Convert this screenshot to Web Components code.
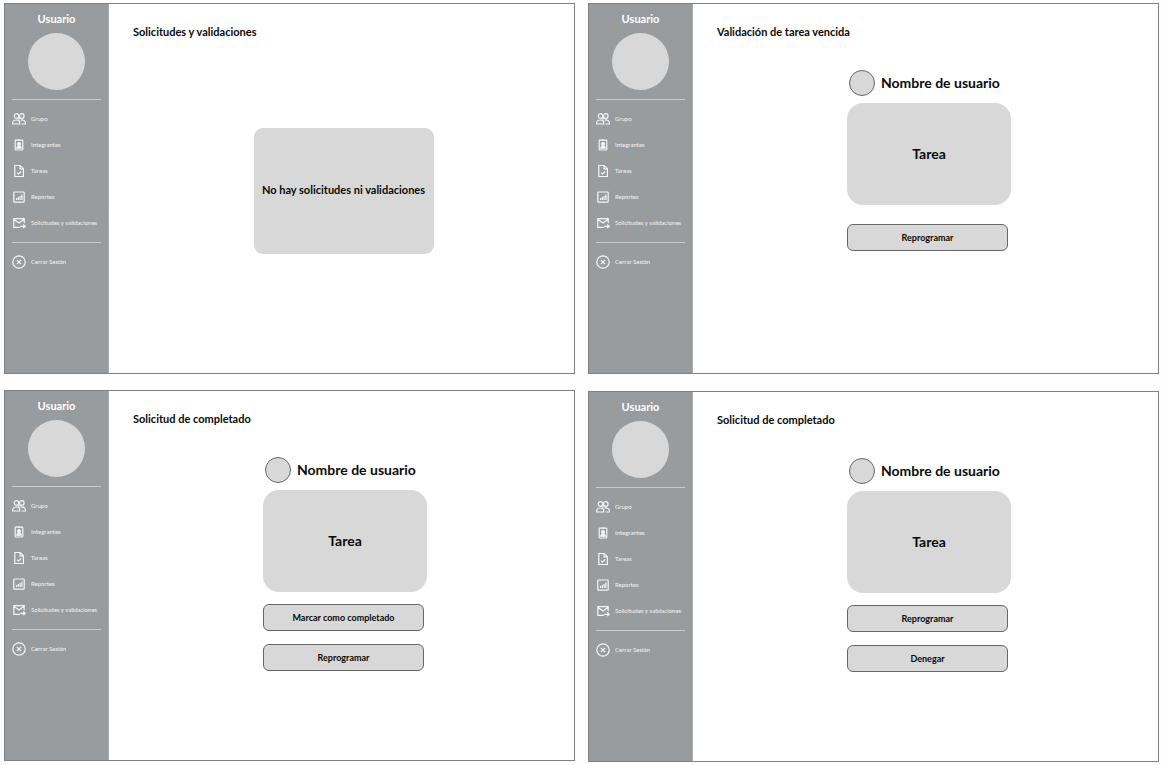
<!DOCTYPE html>
<html lang="es">
<head>
<meta charset="utf-8">
<title>Solicitudes y validaciones</title>
<style>
  body { margin: 0; background: #fefefe; color: #0a0a0a; font-family: Lato, "Liberation Sans", sans-serif; }
</style>
</head>
<body>
<wire-board>
  <wire-screen slot="left" heading="Solicitudes y validaciones">
    <empty-card>No hay solicitudes ni validaciones</empty-card>
  </wire-screen>
  <wire-screen slot="left" heading="Solicitud de completado">
    <task-request user="Nombre de usuario" task="Tarea">
      <action-button>Marcar como completado</action-button>
      <action-button>Reprogramar</action-button>
    </task-request>
  </wire-screen>
  <wire-screen slot="right" heading="Validación de tarea vencida">
    <task-request user="Nombre de usuario" task="Tarea" spaced>
      <action-button>Reprogramar</action-button>
    </task-request>
  </wire-screen>
  <wire-screen slot="right" heading="Solicitud de completado">
    <task-request user="Nombre de usuario" task="Tarea">
      <action-button>Reprogramar</action-button>
      <action-button>Denegar</action-button>
    </task-request>
  </wire-screen>
</wire-board>

<script>
const icons = {
  group: '<circle cx="4.5" cy="4" r="2.3"/><circle cx="9.8" cy="4" r="2.3"/><path d="M.7 12v-1.2C.7 9 2.5 8 4.5 8s3.2 1 3.2 2.6V12zM8.4 8.1c2.8-.7 5 .9 5 2.7V12H9.6M6.4 7.5l1.2-1.2"/>',
  badge: '<rect x="3.2" y="2.2" width="7.6" height="9.8" rx=".8"/><path d="M5.5 2h3M4.8 10.2c0-1.5 1-2 2.2-2s2.2.5 2.2 2z" fill="currentColor"/><circle cx="7" cy="6" r="1.5" fill="currentColor"/>',
  task: '<path d="M2.8 1.5h5.4l3.2 3.2v7.8H2.8zM8 1.5v3.3h3.3M5 8.7l1.5 1.5 2.7-2.8"/>',
  report: '<rect x="1.8" y="2" width="10.4" height="10.2" rx=".8"/><path d="M4.5 10V8M6.3 10V7M8.1 10V6M9.9 10V4.5"/>',
  mail: '<path d="M8 11.3H1.8V2.7h10.4v4.5M1.8 3.2L7 7l5.2-3.8M8.3 10.3h4.5M11.2 8.5l2 1.8-2 1.8"/>',
  close: '<circle cx="7" cy="7" r="6.2"/><path d="M4.8 4.8l4.4 4.4M9.2 4.8L4.8 9.2"/>'
};

function define(name, html, setup) {
  const template = document.createElement('template');
  template.innerHTML = html;
  customElements.define(name, class extends HTMLElement {
    constructor() {
      super();
      this.attachShadow({ mode: 'open' }).append(template.content.cloneNode(true));
    }
    connectedCallback() {
      if (setup) setup(this, this.shadowRoot);
    }
  });
}

define('nav-item', `
  <style>
    :host { display: block; }
    a { display: flex; align-items: center; gap: 5px; height: 26px; color: #f4f5f5; text-decoration: none; font-size: 6px; line-height: 8px; white-space: nowrap; }
    svg { width: 14px; height: 14px; flex: none; fill: none; stroke: currentColor; stroke-width: 1.2; }
  </style>
  <a href="#"><svg viewBox="0 0 14 14" aria-hidden="true"></svg><span><slot></slot></span></a>`,
  (host, root) => { root.querySelector('svg').innerHTML = icons[host.getAttribute('icon')]; });

define('side-menu', `
  <style>
    :host { display: block; background: #989c9f; border-right: 1px solid #aaadaf; padding: 8px 7px; box-sizing: border-box; }
    h2 { margin: 0; color: #fff; font-size: 11px; line-height: 14px; text-align: center; }
    .avatar { width: 57px; height: 57px; margin: 7px auto 9px; border-radius: 50%; background: #d8d8d8; }
    hr { margin: 0; border: 0; height: 1px; background: #c9cbcc; }
    nav { padding: 6px 0; }
  </style>
  <h2>Usuario</h2>
  <div class="avatar"></div>
  <hr>
  <nav aria-label="Principal">
    <nav-item icon="group">Grupo</nav-item>
    <nav-item icon="badge">Integrantes</nav-item>
    <nav-item icon="task">Tareas</nav-item>
    <nav-item icon="report">Reportes</nav-item>
    <nav-item icon="mail">Solicitudes y validaciones</nav-item>
  </nav>
  <hr>
  <nav aria-label="Cuenta"><nav-item icon="close">Cerrar Sesión</nav-item></nav>`);

define('wire-screen', `
  <style>
    :host { display: grid; grid-template-columns: 104px 1fr; min-height: 371px; box-sizing: border-box; border: 1px solid #7f8081; background: #fff; }
    main { padding: 20px 0 0 4px; }
    h1 { margin: 0 0 0 20px; font-size: 11px; line-height: 16px; }
  </style>
  <side-menu></side-menu>
  <main><h1></h1><slot></slot></main>`,
  (host, root) => { root.querySelector('h1').textContent = host.getAttribute('heading'); });

define('empty-card', `
  <style>
    :host { display: flex; align-items: center; justify-content: center; box-sizing: border-box; width: 180px; height: 126px; padding-bottom: 2px; margin: 88px auto 0; border-radius: 9px; background: #d8d8d8; }
    p { margin: 0; font-size: 11px; line-height: 16px; font-weight: 700; white-space: nowrap; }
  </style>
  <p><slot></slot></p>`);

define('action-button', `
  <style>
    :host { display: block; }
    button { display: block; width: 100%; height: 27px; padding: 0; border: 1px solid #666; border-radius: 6px; background: #d8d8d8; color: inherit; font: 700 9px/12px Lato, "Liberation Sans", sans-serif; }
  </style>
  <button type="button"><slot></slot></button>`);

define('task-request', `
  <style>
    :host { display: block; width: 164px; margin: 30px auto 0; padding-left: 3px; }
    header { display: flex; align-items: center; gap: 6px; padding-left: 2px; }
    .avatar { flex: none; box-sizing: border-box; width: 26px; height: 26px; border: 1px solid #666; border-radius: 50%; background: #d8d8d8; }
    h2 { margin: 0; font-size: 14px; line-height: 18px; white-space: nowrap; }
    .card { display: flex; align-items: center; justify-content: center; height: 102px; margin-top: 7px; border-radius: 16px; background: #d8d8d8; font-size: 14px; line-height: 18px; font-weight: 700; }
    .actions { display: grid; gap: 13px; margin-top: 12px; padding-right: 3px; }
    :host([spaced]) .actions { margin-top: 19px; }
  </style>
  <header><div class="avatar"></div><h2></h2></header>
  <div class="card"></div>
  <div class="actions"><slot></slot></div>`,
  (host, root) => {
    root.querySelector('h2').textContent = host.getAttribute('user');
    root.querySelector('.card').textContent = host.getAttribute('task');
  });

define('wire-board', `
  <style>
    :host { display: grid; grid-template-columns: 1fr 1fr; gap: 13px; padding: 3px 3px 3px 4px; }
    .column { display: grid; gap: 16px; align-content: start; }
    .column.right { gap: 17px; }
  </style>
  <div class="column"><slot name="left"></slot></div>
  <div class="column right"><slot name="right"></slot></div>`);
</script>
</body>
</html>
